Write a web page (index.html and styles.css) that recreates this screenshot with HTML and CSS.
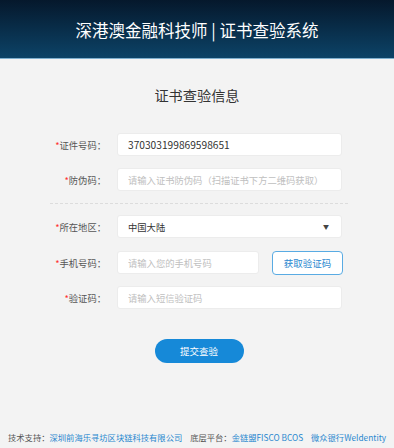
FILE: index.html
```html
<!DOCTYPE html>
<html lang="zh-CN">
  <head>
    <meta charset="UTF-8">
    <meta name="viewport" content="width=device-width, initial-scale=1.0">
    <title>深港澳金融科技师 | 证书查验系统</title>
    <link rel="stylesheet" href="styles.css">
  </head>
  <body>
    <div class="page">
      <header class="top-bar">
        <h1 class="site-title">深港澳金融科技师 | 证书查验系统</h1>
      </header>
      <main class="content">
        <h2 class="form-title">证书查验信息</h2>
        <form class="verify-form" onsubmit="return false">
          <div class="form-row">
            <label class="form-label"><span class="required">*</span>证件号码：</label>
            <input class="form-input" type="text" value="370303199869598651">
          </div>
          <div class="form-row">
            <label class="form-label"><span class="required">*</span>防伪码：</label>
            <input class="form-input" type="text" placeholder="请输入证书防伪码（扫描证书下方二维码获取）">
          </div>
          <div class="divider"></div>
          <div class="form-row">
            <label class="form-label"><span class="required">*</span>所在地区：</label>
            <div class="form-input select-box">
              <span>中国大陆</span>
              <span class="select-arrow">▼</span>
            </div>
          </div>
          <div class="form-row">
            <label class="form-label"><span class="required">*</span>手机号码：</label>
            <input class="form-input phone-input" type="text" placeholder="请输入您的手机号码">
            <button class="code-button" type="button">获取验证码</button>
          </div>
          <div class="form-row">
            <label class="form-label"><span class="required">*</span>验证码：</label>
            <input class="form-input" type="text" placeholder="请输入短信验证码">
          </div>
          <div class="submit-row">
            <button class="submit-button" type="submit">提交查验</button>
          </div>
        </form>
      </main>
      <footer class="footer">
        技术支持：<a href="#">深圳前海乐寻坊区块链科技有限公司</a>
        <span class="footer-gap"></span>底层平台：<a href="#">金链盟FISCO BCOS</a>
        <span class="footer-gap"></span><a href="#">微众银行WeIdentity</a>
      </footer>
    </div>
  </body>
</html>
```

FILE: styles.css
```css
*{
    margin: 0;
    padding: 0;
    box-sizing: border-box;
}
body{
    background-color: #f3f3f3;
    font-family: "Noto Sans CJK SC", "Noto Sans", sans-serif;
    color: #333;
}
.page{
    display: flex;
    flex-direction: column;
    height: 100vh;
}
.top-bar{
    height: 59px;
    background: linear-gradient(to bottom, #05182c, #0c4367);
    border-bottom: 1px solid #7fb0cf;
    display: flex;
    align-items: center;
    justify-content: center;
}
.site-title{
    color: #fff;
    font-size: 16.5px;
    font-weight: normal;
    line-height: 20px;
    margin-top: 2px;
}
.content{
    display: flex;
    flex-direction: column;
    align-items: center;
}
.form-title{
    font-size: 14.2px;
    font-weight: normal;
    color: #333;
    line-height: 20px;
    margin-top: 26px;
}
.verify-form{
    width: 292px;
    margin-top: 28px;
    margin-left: 4px; /* nudges the centred form 2px right */
    display: flex;
    flex-direction: column;
}
.form-row{
    display: flex;
    align-items: center;
    height: 23px;
    margin-bottom: 12px;
}
.form-row:nth-child(4){
    margin-bottom: 13px;
}
.form-label{
    width: 53px;
    margin-right: 11px;
    text-align: right;
    font-size: 9.3px;
    color: #555;
    white-space: nowrap;
}
.required{
    color: #f33;
}
.form-input{
    width: 225px;
    height: 23px;
    border: 1px solid #ececec;
    border-radius: 3px;
    background: #fff;
    padding: 0 10px;
    font-family: inherit;
    font-size: 10.2px;
    color: #333;
    outline: none;
}
.form-input::placeholder{
    color: #c0c0c0;
    font-size: 9.3px;
}
.select-box{
    display: flex;
    align-items: center;
    justify-content: space-between;
    font-size: 9.3px;
}
.select-arrow{
    font-size: 6px;
    color: #444;
    margin-right: 2px;
}
.phone-input{
    width: 142px;
}
.code-button{
    width: 71px;
    height: 24px;
    margin-left: 13px;
    background: #fff;
    border: 1px solid #59abe3;
    border-radius: 4px;
    color: #2a88cf;
    font-family: inherit;
    font-size: 9.5px;
    cursor: pointer;
}
.divider{
    border-top: 1px dashed #dcdcdc;
    margin: 0 -3px 11px -3px;
}
.submit-row{
    display: flex;
    justify-content: center;
    margin-top: 18px;
}
.submit-button{
    width: 89px;
    height: 24px;
    border: none;
    border-radius: 12px;
    background-color: #1689d8;
    color: #fff;
    font-family: inherit;
    font-size: 9.5px;
    cursor: pointer;
}
.footer{
    margin-top: auto;
    padding: 0 0 5px 8px;
    font-size: 8.3px;
    line-height: 12px;
    color: #555;
    white-space: nowrap;
}
.footer a{
    color: #2a88cf;
    text-decoration: none;
}
.footer-gap{
    display: inline-block;
    width: 6px;
}
```
